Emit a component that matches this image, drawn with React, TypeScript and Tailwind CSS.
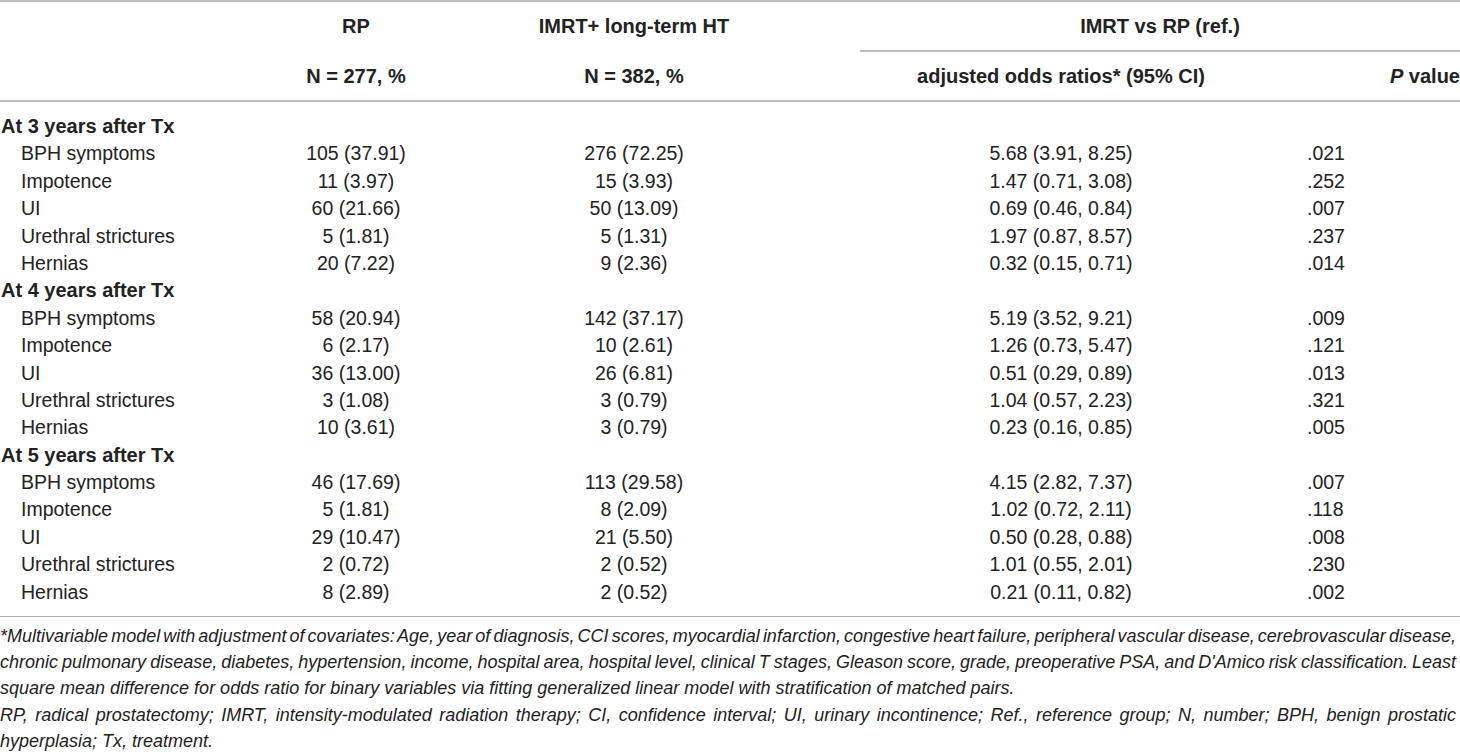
const groups = [
  {
    label: 'At 3 years after Tx',
    rows: [
      ['BPH symptoms', '105 (37.91)', '276 (72.25)', '5.68 (3.91, 8.25)', '.021'],
      ['Impotence', '11 (3.97)', '15 (3.93)', '1.47 (0.71, 3.08)', '.252'],
      ['UI', '60 (21.66)', '50 (13.09)', '0.69 (0.46, 0.84)', '.007'],
      ['Urethral strictures', '5 (1.81)', '5 (1.31)', '1.97 (0.87, 8.57)', '.237'],
      ['Hernias', '20 (7.22)', '9 (2.36)', '0.32 (0.15, 0.71)', '.014'],
    ],
  },
  {
    label: 'At 4 years after Tx',
    rows: [
      ['BPH symptoms', '58 (20.94)', '142 (37.17)', '5.19 (3.52, 9.21)', '.009'],
      ['Impotence', '6 (2.17)', '10 (2.61)', '1.26 (0.73, 5.47)', '.121'],
      ['UI', '36 (13.00)', '26 (6.81)', '0.51 (0.29, 0.89)', '.013'],
      ['Urethral strictures', '3 (1.08)', '3 (0.79)', '1.04 (0.57, 2.23)', '.321'],
      ['Hernias', '10 (3.61)', '3 (0.79)', '0.23 (0.16, 0.85)', '.005'],
    ],
  },
  {
    label: 'At 5 years after Tx',
    rows: [
      ['BPH symptoms', '46 (17.69)', '113 (29.58)', '4.15 (2.82, 7.37)', '.007'],
      ['Impotence', '5 (1.81)', '8 (2.09)', '1.02 (0.72, 2.11)', '.118'],
      ['UI', '29 (10.47)', '21 (5.50)', '0.50 (0.28, 0.88)', '.008'],
      ['Urethral strictures', '2 (0.72)', '2 (0.52)', '1.01 (0.55, 2.01)', '.230'],
      ['Hernias', '8 (2.89)', '2 (0.52)', '0.21 (0.11, 0.82)', '.002'],
    ],
  },
]

const cols = 'grid grid-cols-[232px_248px_308px_72px_402px_198px]'

export default function App() {
  return (
    <div className="w-[1460px] bg-white text-[#222] font-['Liberation_Sans',Arial,sans-serif]">
      {/* Header */}
      <div className="border-t-2 border-b-2 border-[#bcbcbc] text-[20px] font-bold">
        <div className={`${cols} h-[48px] items-center`}>
          <div />
          <div className="text-center">RP</div>
          <div className="text-center">IMRT+ long-term HT</div>
          <div />
          <div className="col-span-2 h-full flex items-center justify-center">IMRT vs RP (ref.)</div>
        </div>
        <div className={`${cols} h-[2px]`}>
          <div className="col-start-5 col-span-2 bg-[#bcbcbc]" />
        </div>
        <div className={`${cols} h-[48px] items-center`}>
          <div />
          <div className="text-center">N = 277, %</div>
          <div className="text-center">N = 382, %</div>
          <div />
          <div className="text-center">adjusted odds ratios* (95% CI)</div>
          <div className="text-right">
            <span className="italic">P</span> value
          </div>
        </div>
      </div>

      {/* Body */}
      <div className="pt-[11px] pb-[10px] border-b-[1.5px] border-[#b0b0b0] text-[19.5px]">
        {groups.map((g) => (
          <div key={g.label}>
            <div className="h-[27.4px] leading-[27.4px] pl-[1px] text-[20px] font-bold">{g.label}</div>
            {g.rows.map((r) => (
              <div key={g.label + r[0]} className={`${cols} h-[27.4px] leading-[27.4px]`}>
                <div className="pl-[21px] whitespace-nowrap">{r[0]}</div>
                <div className="text-center">{r[1]}</div>
                <div className="text-center">{r[2]}</div>
                <div />
                <div className="text-center">{r[3]}</div>
                <div className="pl-[45px]">{r[4]}</div>
              </div>
            ))}
          </div>
        ))}
      </div>

      {/* Footnotes */}
      <div className="pt-[6px] italic text-[18px] leading-[26.2px] pr-[4px]">
        <div className="whitespace-nowrap text-justify [text-align-last:justify] [word-spacing:-4px]">
          *Multivariable model with adjustment of covariates: Age, year of diagnosis, CCI scores, myocardial infarction, congestive heart failure, peripheral vascular disease, cerebrovascular disease,
        </div>
        <div className="whitespace-nowrap text-justify [text-align-last:justify] [word-spacing:-4px]">
          chronic pulmonary disease, diabetes, hypertension, income, hospital area, hospital level, clinical T stages, Gleason score, grade, preoperative PSA, and D'Amico risk classification. Least
        </div>
        <div className="whitespace-nowrap">
          square mean difference for odds ratio for binary variables via fitting generalized linear model with stratification of matched pairs.
        </div>
        <div className="whitespace-nowrap text-justify [text-align-last:justify]">
          RP, radical prostatectomy; IMRT, intensity-modulated radiation therapy; CI, confidence interval; UI, urinary incontinence; Ref., reference group; N, number; BPH, benign prostatic
        </div>
        <div>hyperplasia; Tx, treatment.</div>
      </div>
    </div>
  )
}
